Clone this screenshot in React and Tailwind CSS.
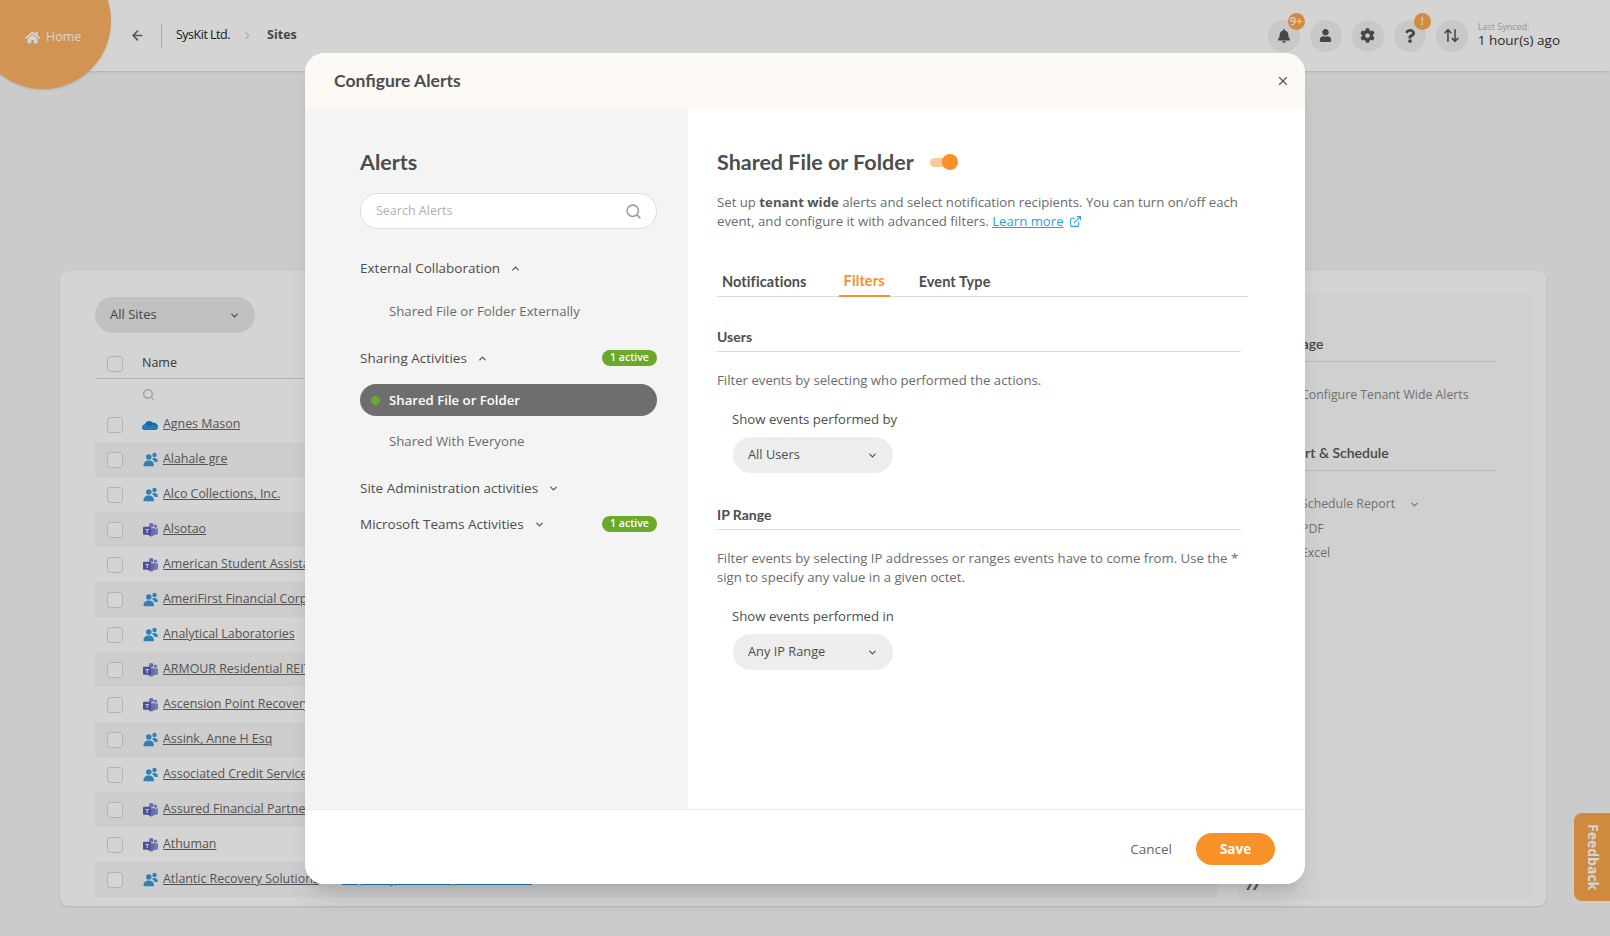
import { ArrowLeft, ArrowUpDown, ChevronDown, ChevronRight, ChevronUp, ExternalLink, Search, X } from 'lucide-react'
import { FaBell, FaCog, FaHome, FaQuestion, FaUser } from 'react-icons/fa'

const BODY = { fontFamily: '"Open Sans", "Noto Sans", sans-serif' }
const HEADING = { fontFamily: 'Lato, sans-serif' }

const SITES = [
  ['Agnes Mason', 'cloud'],
  ['Alahale gre', 'group'],
  ['Alco Collections, Inc.', 'group'],
  ['Alsotao', 'teams'],
  ['American Student Assistance', 'teams'],
  ['AmeriFirst Financial Corporation', 'group'],
  ['Analytical Laboratories', 'group'],
  ['ARMOUR Residential REIT', 'teams'],
  ['Ascension Point Recovery', 'teams'],
  ['Assink, Anne H Esq', 'group'],
  ['Associated Credit Services', 'group'],
  ['Assured Financial Partners', 'teams'],
  ['Athuman', 'teams'],
  ['Atlantic Recovery Solutions', 'group'],
]

function CloudIcon() {
  return (
    <svg width="16" height="16" viewBox="0 0 16 16">
      <path d="M3.2 13C1.4 13 0 11.800 0 10.300c0-1.400 1.100-2.500 2.600-2.700C3.200 5.500 5 4 7.200 4c1.500 0 2.800.7 3.600 1.800 2.800-.4 5.200 1.500 5.200 4 0 1.800-1.400 3.200-3.300 3.200z" fill="#1f7fc9" />
      <path d="M3.200 13C1.400 13 0 11.800 0 10.300c0-1.100.7-2 1.700-2.400C4 7.400 6 8.300 7.200 9.800 8.800 8.200 13 7.600 16 9.300c.3 2.200-1.300 3.700-3.300 3.700z" fill="#2b96dd" />
    </svg>
  )
}

function GroupIcon() {
  return (
    <svg width="15" height="15" viewBox="0 0 15 15" fill="#3a9bd8">
      <circle cx="5.800" cy="5" r="2.800" />
      <path d="M.5 13.500c0-3.200 2.300-5 5.300-5s5.200 1.800 5.200 5c0 .5-.4.800-.8.800H1.300c-.5 0-.8-.3-.8-.8z" />
      <circle cx="11.500" cy="3" r="2.200" />
      <path d="M9.500 6.200c2.900-.6 5.300.6 5.300 3 0 .5-.3.800-.8.800h-2.300c-.4-1.100-1.200-2-2.200-2.500z" />
    </svg>
  )
}

function TeamsIcon() {
  return (
    <svg width="15" height="16" viewBox="0 0 16 16">
      <circle cx="13.300" cy="4" r="1.800" fill="#8b92d6" />
      <path d="M11 6.500h5v4.300c0 1.500-1.100 2.600-2.500 2.600-1.500 0-2.500-1.100-2.500-2.600z" fill="#8b92d6" />
      <circle cx="8.800" cy="3" r="2.400" fill="#7b83c9" />
      <path d="M5 6h7.400v5.300c0 2-1.600 3.700-3.700 3.700S5 13.300 5 11.300z" fill="#7b83c9" />
      <rect x="0" y="4.500" width="8.500" height="8.500" rx="1" fill="#5b5fb5" />
      <text x="4.250" y="11" textAnchor="middle" fontSize="6.500" fontWeight="700" fill="#fff" fontFamily="Liberation Sans, sans-serif">T</text>
    </svg>
  )
}

function SiteIcon({ kind }) {
  if (kind === 'cloud') return <CloudIcon />
  if (kind === 'teams') return <TeamsIcon />
  return <GroupIcon />
}

function Checkbox() {
  return <span className="block w-4 h-4 shrink-0 rounded-[3px] border border-[#d9d9d9] bg-white" />
}

function TopButton({ children, badge }) {
  return (
    <span className="relative flex items-center justify-center w-8 h-8 rounded-full bg-[#f1f1f1] text-[#555]">
      {children}
      {badge && (
        <span className="absolute -top-[7px] left-[20px] flex items-center justify-center w-[17px] h-[17px] rounded-full bg-[#fda54e] text-white text-[11px] font-semibold">
          {badge}
        </span>
      )}
    </span>
  )
}

function SiteRow({ name, kind, index, last }) {
  return (
    <div className={`flex items-center h-[35px] pl-3 ${index % 2 ? 'bg-[#f7f7f7]' : ''}`}>
      <Checkbox />
      <span className="flex items-center justify-center w-[16px] ml-[19px] shrink-0">
        <SiteIcon kind={kind} />
      </span>
      <a className="ml-[5px] w-[172px] shrink-0 whitespace-nowrap overflow-hidden text-[12.4px] text-[#666] underline">{name}</a>
      {last && (
        <>
          <a className="ml-[7px] w-[190px] overflow-hidden text-[12.4px] text-[#2b8fd8] underline whitespace-nowrap">https://syskit.sharepoint.com/sites/atlantic</a>
          <ExternalLink size={11} className="ml-[5px] text-[#2b8fd8]" />
        </>
      )}
    </div>
  )
}

function GroupTitle({ title, open, active, className }) {
  const Icon = open ? ChevronUp : ChevronDown
  return (
    <div className={`flex items-center text-[13.5px] font-medium text-[#4d4d4d] ${className}`}>
      <span>{title}</span>
      <Icon size={11} strokeWidth={2.5} className="ml-[10px]" />
      {active && (
        <span className="ml-auto flex items-center justify-center w-[55px] h-[16px] rounded-full bg-[#6aa92a] text-white text-[10.5px] font-semibold">1 active</span>
      )}
    </div>
  )
}

function FilterBlock({ title, text, label, value, className }) {
  return (
    <section className={className}>
      <h3 className="w-[524px] pb-[4px] border-b border-[#dcdcdc] text-[14px] leading-5 font-bold text-[#4d4d4d]" style={HEADING}>{title}</h3>
      <p className="mt-[19px] w-[524px] text-[13.2px] leading-[19px] text-[#6b6b6b]">{text}</p>
      <p className="mt-[19px] ml-[15px] text-[13.2px] leading-5 text-[#4d4d4d]">{label}</p>
      <div className="mt-[8px] ml-[16px] flex items-center justify-between w-[160px] h-9 px-[15px] rounded-full bg-[#ededed] text-[12.8px] text-[#4d4d4d]">
        {value}
        <ChevronDown size={11} strokeWidth={2.5} />
      </div>
    </section>
  )
}

export default function App() {
  return (
    <div className="relative w-[1610px] h-[936px] overflow-hidden bg-[#f5f5f5]" style={BODY}>
      {/* page behind the dialog */}
      <header className="flex items-center h-[71px] bg-white shadow-sm">
        <nav className="flex items-center ml-[130px] text-[12.5px]">
          <ArrowLeft size={15} strokeWidth={2.5} className="text-[#666]" />
          <span className="ml-[16px] mr-[14px] w-px h-6 bg-[#cfcfcf]" />
          <span className="text-[#222] tracking-[-0.5px]">SysKit Ltd.</span>
          <ChevronRight size={11} className="ml-[12px] mr-[14px] text-[#aaa]" />
          <span className="font-bold text-[#555]">Sites</span>
        </nav>
        <div className="ml-auto mr-[50px] flex items-center">
          <div className="flex gap-[10px]">
            <TopButton badge="9+"><FaBell size={14} /></TopButton>
            <TopButton><FaUser size={13} /></TopButton>
            <TopButton><FaCog size={15} /></TopButton>
            <TopButton badge="!"><FaQuestion size={14} /></TopButton>
            <TopButton><ArrowUpDown size={17} strokeWidth={2.2} /></TopButton>
          </div>
          <div className="ml-[10px] whitespace-nowrap">
            <p className="text-[9px] leading-[10px] text-[#b5b5b5]">Last Synced:</p>
            <p className="text-[13.5px] leading-[17px] text-[#333]">1 hour(s) ago</p>
          </div>
        </div>
      </header>

      <main className="flex ml-[60px] mr-[64px] mt-[200px] h-[635px] rounded-lg bg-white shadow-sm">
        <div className="flex-1 min-w-0 pl-[35px] pt-[26px]">
          <div className="flex items-center justify-between w-[160px] h-9 px-[15px] rounded-full bg-[#e8e8e8] text-[13px] text-[#555]">
            All Sites
            <ChevronDown size={11} strokeWidth={2.5} />
          </div>
          <div className="w-[1123px] mt-[15px]">
            <div className="flex items-center h-[31px] pl-3 pt-px border-b border-[#dcdcdc] text-[12.5px] text-[#444]">
              <Checkbox />
              <span className="ml-[19px]">Name</span>
            </div>
            <div className="flex items-center h-[28px] pl-[47px] pt-[2px]">
              <Search size={13} strokeWidth={2.5} className="text-[#c0c0c0]" />
            </div>
            {SITES.map(([name, kind], i) => (
              <SiteRow key={name} name={name} kind={kind} index={i} last={i === SITES.length - 1} />
            ))}
          </div>
        </div>
        <aside className="relative w-[295px] mt-[21px] mb-[6px] mr-[13px] rounded-lg bg-[#fbfbfb] pl-[36px] pt-[42px]">
          <h4 className="w-[221px] pb-[8px] border-b border-[#dcdcdc] text-[14px] leading-[19px] font-semibold text-[#555]" style={HEADING}>Manage</h4>
          <p className="mt-[24px] ml-[27px] text-[12.3px] text-[#888]">Configure Tenant Wide Alerts</p>
          <h4 className="mt-[39px] w-[221px] pb-[8px] border-b border-[#dcdcdc] text-[14px] leading-[19px] font-semibold text-[#555]" style={HEADING}>Export &amp; Schedule</h4>
          <p className="mt-[24px] ml-[27px] flex items-center text-[12.3px] leading-[18px] text-[#888]">Schedule Report<ChevronDown size={11} strokeWidth={2.5} className="ml-[14px]" /></p>
          <p className="mt-[7px] ml-[27px] text-[12.3px] leading-[18px] text-[#888]">PDF</p>
          <p className="mt-[6px] ml-[27px] text-[12.3px] leading-[18px] text-[#888]">Excel</p>
          <span className="absolute left-[9px] bottom-[8px] text-[16px] leading-none italic font-bold text-[#666]">//</span>
        </aside>
      </main>

      <div className="absolute left-[-25px] top-[-47px] w-[136px] h-[136px] rounded-full bg-[#fdb364] shadow" />
      <div className="absolute left-[25px] top-[28px] flex items-center gap-[6px] text-[12.5px] text-white">
        <FaHome size={15} />
        Home
      </div>
      <div className="absolute right-0 top-[813px] flex items-center justify-center w-[36px] h-[88px] pl-[3px] rounded-l-lg bg-[#fba64d]">
        <span className="[writing-mode:vertical-rl] text-[14px] font-bold text-white">Feedback</span>
      </div>

      {/* dim layer */}
      <div className="absolute inset-0 bg-black/[0.17]" />

      {/* dialog */}
      <div className="absolute left-[305px] top-[53px] flex flex-col w-[1000px] h-[831px] rounded-[20px] overflow-hidden bg-white shadow-xl">
        <div className="flex items-center justify-between h-[56px] pl-[29px] pr-[15px] bg-[#fdf9f5]">
          <h2 className="text-[17.5px] font-bold text-[#4d4d4d]" style={HEADING}>Configure Alerts</h2>
          <X size={14} strokeWidth={2} className="text-[#555]" />
        </div>

        <div className="flex flex-1 min-h-0">
          <div className="w-[383px] shrink-0 pl-[55px] pr-[31px] pt-[37px] bg-[#f4f4f4]">
            <h3 className="text-[21.5px] leading-8 font-bold text-[#4d4d4d]" style={HEADING}>Alerts</h3>
            <div className="flex items-center justify-between h-9 mt-[15px] pl-[15px] pr-[14px] rounded-full border border-[#dcdcdc] bg-white text-[12.5px] text-[#b0b0b0]">
              Search Alerts
              <Search size={17} strokeWidth={2.2} className="text-[#9a9a9a]" />
            </div>
            <GroupTitle title="External Collaboration" open className="mt-[29px] h-5" />
            <p className="mt-[23px] pl-[29px] text-[13.2px] leading-5 text-[#6b6b6b]">Shared File or Folder Externally</p>
            <GroupTitle title="Sharing Activities" open active className="mt-[27px] h-5" />
            <div className="flex items-center h-[32px] mt-[16px] pl-[11px] pt-px rounded-full bg-[#6e6e6e] text-[13.2px] font-semibold text-white">
              <span className="w-[9px] h-[9px] rounded-full bg-[#6aa92a]" />
              <span className="ml-[9px]">Shared File or Folder</span>
            </div>
            <p className="mt-[15px] pl-[29px] text-[13.2px] leading-5 text-[#6b6b6b]">Shared With Everyone</p>
            <GroupTitle title="Site Administration activities" className="mt-[27px] h-5" />
            <GroupTitle title="Microsoft Teams Activities" active className="mt-[16px] h-5" />
          </div>

          <div className="flex-1 min-w-0 pl-[29px] pr-[57px] pt-[37px]">
            <div className="flex items-center h-8">
              <h3 className="text-[21.5px] font-bold text-[#4d4d4d]" style={HEADING}>Shared File or Folder</h3>
              <span className="relative ml-[16px] w-[24px] h-[9px] rounded-full bg-[#fdc994]">
                <span className="absolute right-[-4px] top-[-3.500px] w-4 h-4 rounded-full bg-[#f99129]" />
              </span>
            </div>
            <p className="mt-[15px] w-[530px] text-[13.2px] leading-[19px] text-[#6b6b6b]">
              Set up <b className="font-bold text-[#555]">tenant wide</b> alerts and select notification recipients. You can turn on/off each event, and configure it with advanced filters.{' '}
              <a className="text-[#2b9fe0] underline">Learn more</a>
              <ExternalLink size={13} className="inline ml-[5px] mb-[1px] text-[#2b9fe0]" />
            </p>
            <div className="flex items-end h-[35px] mt-[31px] border-b border-[#dcdcdc] text-[14.5px] tracking-[0.1px] font-bold text-[#4d4d4d]" style={HEADING}>
              <span className="px-[5px] pb-[3px]">Notifications</span>
              <span className="ml-[27px] px-[5px] pb-[3px] -mb-px border-b-2 border-[#f99129] text-[#f99129]">Filters</span>
              <span className="ml-[29px] pb-[3px]">Event Type</span>
            </div>
            <FilterBlock
              className="mt-[30px]"
              title="Users"
              text="Filter events by selecting who performed the actions."
              label="Show events performed by"
              value="All Users"
            />
            <FilterBlock
              className="mt-[32px]"
              title="IP Range"
              text="Filter events by selecting IP addresses or ranges events have to come from. Use the * sign to specify any value in a given octet."
              label="Show events performed in"
              value="Any IP Range"
            />
          </div>
        </div>

        <div className="flex items-center justify-end h-[75px] pt-[4px] pr-[30px] border-t border-[#ececec] bg-white">
          <span className="text-[13.5px] text-[#666]">Cancel</span>
          <span className="ml-[24px] flex items-center justify-center w-[79px] h-[32px] rounded-full bg-[#f99129] text-[13.5px] font-bold text-white">Save</span>
        </div>
      </div>
    </div>
  )
}
